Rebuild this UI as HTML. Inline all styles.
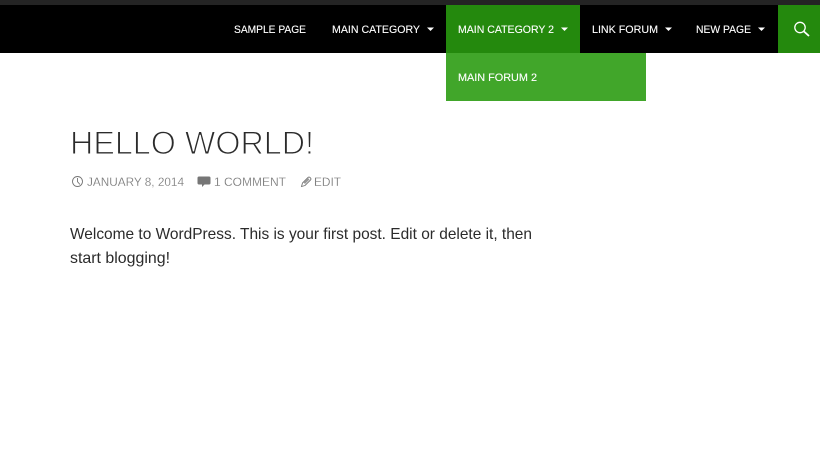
<!DOCTYPE html>
<html lang="en">
<head>
<meta charset="utf-8">
<title>Hello world!</title>
<style>
html,body{margin:0;padding:0;background:#fff;width:820px;height:452px;overflow:hidden}
svg{display:block}
text{font-family:"Liberation Sans",sans-serif}
.n{font-size:11px;fill:#fff;stroke:#fff;stroke-width:.12}
.m{font-size:11.500px;fill:#767676;stroke:#fff;stroke-width:.15}
.b{font-size:16px;fill:#2b2b2b}
</style>
</head>
<body>
<svg width="820" height="452" viewBox="0 0 820 452" xmlns="http://www.w3.org/2000/svg">
<rect width="820" height="452" fill="#fff"/>
<rect width="820" height="5" fill="#242424"/>
<rect y="5" width="820" height="48" fill="#000"/>
<rect x="446" y="5" width="134" height="48" fill="#24890d"/>
<rect x="446" y="53" width="200" height="48" fill="#41a62a"/>
<rect x="778" y="5" width="42" height="48" fill="#24890d"/>

<text class="n" x="234" y="33" textLength="72" lengthAdjust="spacingAndGlyphs">SAMPLE PAGE</text>
<text class="n" x="332" y="33" textLength="88" lengthAdjust="spacingAndGlyphs">MAIN CATEGORY</text>
<path d="M427 27.500h7l-3.500 3.500z" fill="#fff"/>
<text class="n" x="458" y="33" textLength="96" lengthAdjust="spacingAndGlyphs">MAIN CATEGORY 2</text>
<path d="M561 27.500h7l-3.500 3.500z" fill="#fff"/>
<text class="n" x="592" y="33" textLength="66" lengthAdjust="spacingAndGlyphs">LINK FORUM</text>
<path d="M665 27.500h7l-3.500 3.500z" fill="#fff"/>
<text class="n" x="696" y="33" textLength="55" lengthAdjust="spacingAndGlyphs">NEW PAGE</text>
<path d="M758 27.500h7l-3.500 3.500z" fill="#fff"/>
<text class="n" x="458" y="81" textLength="79" lengthAdjust="spacingAndGlyphs">MAIN FORUM 2</text>

<circle cx="800" cy="27.500" r="5.200" fill="none" stroke="#fff" stroke-width="1.300"/>
<path d="M804 31.500l5 4.500" fill="none" stroke="#fff" stroke-width="1.800"/>

<text x="70" y="154" font-size="32" fill="#2b2b2b" stroke="#fff" stroke-width="1.100" textLength="244" lengthAdjust="spacingAndGlyphs">HELLO WORLD!</text>

<circle cx="77.500" cy="181.500" r="5" fill="none" stroke="#767676" stroke-width=".9"/>
<path d="M77.500 178v3.700l2.500 2.800" fill="none" stroke="#767676" stroke-width=".9"/>
<text class="m" x="87" y="186" textLength="97" lengthAdjust="spacingAndGlyphs">JANUARY 8, 2014</text>

<path d="M199 176.500h10a1.500 1.500 0 0 1 1.500 1.500v5a1.500 1.500 0 0 1-1.500 1.500h-4.500l-2.500 2.500v-2.500h-3a1.500 1.500 0 0 1-1.500-1.500v-5a1.500 1.500 0 0 1 1.500-1.500z" fill="#767676"/>
<text class="m" x="214" y="186" textLength="72" lengthAdjust="spacingAndGlyphs">1 COMMENT</text>

<path d="M301.500 186.500l1-3.500 5.500-5.500a1.300 1.300 0 0 1 2 0l.5.500a1.300 1.300 0 0 1 0 2l-5.500 5.500z" fill="none" stroke="#767676" stroke-width=".9"/>
<path d="M303.500 182.500l4.500-4.500 1.500 1.500-4.500 4.500z" fill="#999"/>
<text class="m" x="314" y="186" textLength="27" lengthAdjust="spacingAndGlyphs">EDIT</text>

<text class="b" x="70" y="239" textLength="462" lengthAdjust="spacingAndGlyphs">Welcome to WordPress. This is your first post. Edit or delete it, then</text>
<text class="b" x="70" y="263" textLength="100" lengthAdjust="spacingAndGlyphs">start blogging!</text>
</svg>
</body>
</html>
